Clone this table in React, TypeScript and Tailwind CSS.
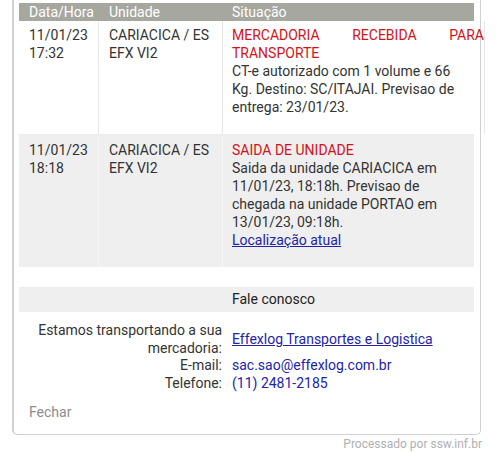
export default function App() {
  const cell = "pl-[10px] pt-[5px] pb-[18px]";
  return (
    <div className="w-[500px] h-[452px] overflow-hidden bg-white font-['Roboto','Liberation_Sans',sans-serif] text-[14px] leading-[18px] text-[#333]">
      {/* Card */}
      <div className="ml-[12px] w-[469px] border-l-2 border-r border-b border-[#d0d0d0] rounded-b-[5px] pl-[5px] pr-[6px] pt-[3px] pb-[13px]">
        {/* Tracking table */}
        <div className="grid grid-cols-[80px_124px_1fr] bg-[#a6a79f] text-white h-[18px]">
          <div className="pl-[10px]">Data/Hora</div>
          <div className="pl-[10px]">Unidade</div>
          <div className="pl-[9px]">Situação</div>
        </div>

        <div className="grid grid-cols-[80px_124px_1fr] border-b-2 border-[#eeeeee]">
          <div className={`${cell} border-r border-[#e6e6e6]`}>
            11/01/23
            <br />
            17:32
          </div>
          <div className={`${cell} border-r border-[#e6e6e6]`}>
            CARIACICA / ES
            <br />
            EFX VI2
          </div>
          <div className="pl-[9px] pt-[5px] pb-[18px] border-r border-[#e6e6e6]">
            <div className="w-[252px] text-justify text-[#d4121a]">MERCADORIA RECEBIDA PARA TRANSPORTE</div>
            <div className="pr-[16px]">
              CT-e autorizado com 1 volume e 66 Kg. Destino: SC/ITAJAI. Previsao de entrega: 23/01/23.
            </div>
          </div>
        </div>

        <div className="grid grid-cols-[80px_124px_1fr] bg-[#efefef]">
          <div className={`${cell} border-r border-[#f6f6f6]`}>
            11/01/23
            <br />
            18:18
          </div>
          <div className={`${cell} border-r border-[#f6f6f6]`}>
            CARIACICA / ES
            <br />
            EFX VI2
          </div>
          <div className="pl-[9px] pr-[16px] pt-[5px] pb-[18px]">
            <div className="text-[#d4121a]">SAIDA DE UNIDADE</div>
            <div>
              Saida da unidade CARIACICA em 11/01/23, 18:18h. Previsao de chegada na unidade PORTAO em 13/01/23,
              09:18h.
            </div>
            <a href="#" className="text-[#2323a8] underline">
              Localização atual
            </a>
          </div>
        </div>

        {/* Contact */}
        <div className="mt-[20px] grid grid-cols-[203px_1fr] bg-[#efefef] h-[25px] leading-[25px] text-[#222]">
          <div />
          <div className="pl-[10px]">Fale conosco</div>
        </div>

        <div className="mt-[10px] grid grid-cols-[203px_1fr] leading-[17.5px]">
          <div className="text-right">
            Estamos transportando a sua
            <br />
            mercadoria:
          </div>
          <div className="pl-[10px] self-center">
            <a href="#" className="text-[#2323a8] underline">
              Effexlog Transportes e Logistica
            </a>
          </div>
          <div className="text-right">E-mail:</div>
          <div className="pl-[10px] text-[#2323a8]">sac.sao@effexlog.com.br</div>
          <div className="text-right">Telefone:</div>
          <div className="pl-[10px] text-[#2323a8]">(11) 2481-2185</div>
        </div>

        <div className="mt-[11px] pl-[10px] text-[#8c8c8c]">Fechar</div>
      </div>

      <div className="mt-[2px] pr-[18px] text-right text-[12px] leading-[14px] text-[#b0b0b0]">
        Processado por ssw.inf.br
      </div>
    </div>
  );
}
